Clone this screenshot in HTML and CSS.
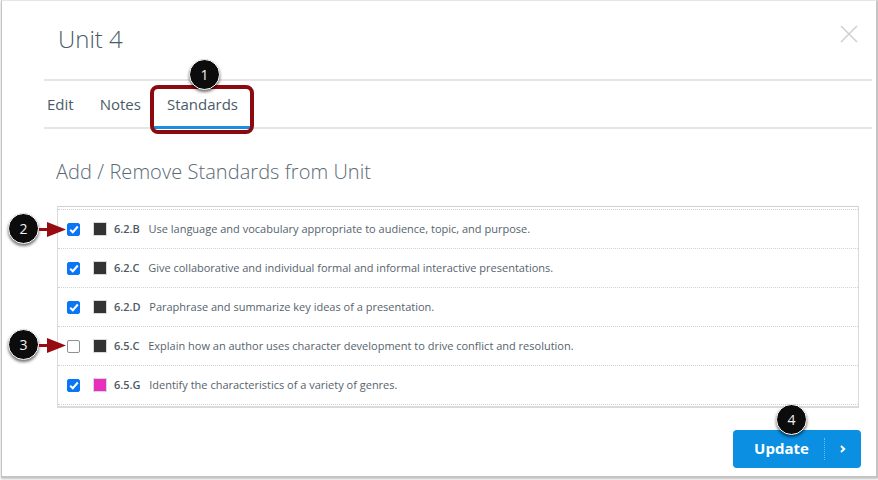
FILE: index.html
```html
<!DOCTYPE html>
<html lang="en">
<head>
<meta charset="utf-8">
<title>Unit 4</title>
<link rel="stylesheet" href="styles.css">
</head>
<body>
<div class="modal">
  <header class="head">
    <h1 class="title">Unit 4</h1>
    <svg class="close" width="18" height="18" viewBox="0 0 18 18"><path d="M1 1 L17 17 M17 1 L1 17" stroke="#cfd2d3" stroke-width="1.6" fill="none"/></svg>
  </header>
  <nav class="tabs">
    <span class="tab">Edit</span>
    <span class="tab">Notes</span>
    <span class="tab active">Standards</span>
  </nav>
  <h2 class="section">Add / Remove Standards from Unit</h2>
  <div class="list">
    <div class="row"><span class="check on"><svg width="10" height="9" viewBox="0 0 10 9"><path d="M1.2 4.8 L3.8 7.2 L8.8 1.5" stroke="#fff" stroke-width="2" fill="none"/></svg></span><span class="swatch dark"></span><b class="code">6.2.B</b><span class="text">Use language and vocabulary appropriate to audience, topic, and purpose.</span></div>
    <div class="row"><span class="check on"><svg width="10" height="9" viewBox="0 0 10 9"><path d="M1.2 4.8 L3.8 7.2 L8.8 1.5" stroke="#fff" stroke-width="2" fill="none"/></svg></span><span class="swatch dark"></span><b class="code">6.2.C</b><span class="text">Give collaborative and individual formal and informal interactive presentations.</span></div>
    <div class="row"><span class="check on"><svg width="10" height="9" viewBox="0 0 10 9"><path d="M1.2 4.8 L3.8 7.2 L8.8 1.5" stroke="#fff" stroke-width="2" fill="none"/></svg></span><span class="swatch dark"></span><b class="code">6.2.D</b><span class="text">Paraphrase and summarize key ideas of a presentation.</span></div>
    <div class="row"><span class="check"></span><span class="swatch dark"></span><b class="code">6.5.C</b><span class="text">Explain how an author uses character development to drive conflict and resolution.</span></div>
    <div class="row"><span class="check on"><svg width="10" height="9" viewBox="0 0 10 9"><path d="M1.2 4.8 L3.8 7.2 L8.8 1.5" stroke="#fff" stroke-width="2" fill="none"/></svg></span><span class="swatch pink"></span><b class="code">6.5.G</b><span class="text">Identify the characteristics of a variety of genres.</span></div>
  </div>
  <footer class="foot">
    <button class="update"><span class="update-label">Update</span><span class="update-icon"><svg width="6" height="8" viewBox="0 0 6 8"><path d="M1 1 L4.2 4 L1 7" stroke="#fff" stroke-width="2" fill="none"/></svg></span></button>
  </footer>
</div>

<div class="highlight"></div>
<span class="badge b1">1</span>
<span class="badge b2">2</span>
<span class="badge b3">3</span>
<span class="badge b4">4</span>
<svg class="arrow a2" width="28" height="15" viewBox="0 0 28 15"><path d="M0 6 H8 V0 L27 7.5 L8 15 V9 H0 Z" fill="#960c12"/></svg>
<svg class="arrow a3" width="28" height="15" viewBox="0 0 28 15"><path d="M0 6 H8 V0 L27 7.5 L8 15 V9 H0 Z" fill="#960c12"/></svg>
</body>
</html>
```
FILE: styles.css
```css
* { box-sizing: border-box; }
html, body { margin: 0; padding: 0; background: #fff; }
body {
  width: 878px;
  height: 480px;
  overflow: hidden;
  position: relative;
  font-family: "Open Sans", sans-serif;
}
.modal {
  width: 877px;
  height: 478px;
  margin-left: 1px;
  background: #fff;
  border-style: solid;
  border-color: #e6e6e6 #c4c4c4 #c4c4c4 #c4c4c4;
  border-width: 1px 2px 2px 1px;
  box-shadow: 0 1px 2px rgba(0,0,0,.25);
  display: flex;
  flex-direction: column;
  padding: 0 4px 0 42px;
}
.head {
  height: 80px;
  display: flex;
  justify-content: space-between;
  align-items: flex-start;
  border-bottom: 2px solid #e3e5e6;
}
.title {
  margin: 21px 0 0 14px;
  font-size: 24px;
  line-height: 33px;
  font-weight: 300;
  color: #4a5b68;
}
.close { margin: 24px 14px 0 0; }
.tabs {
  height: 48px;
  display: flex;
  border-bottom: 2px solid #e3e5e6;
  padding-left: 3px;
}
.tab {
  font-size: 15px;
  line-height: 20px;
  color: #4a5b68;
  padding-top: 13px;
  margin-right: 26px;
}
.tab.active {
  padding: 13px 13px 0;
  margin-left: -13px;
  height: 48px;
  border-bottom: 3px solid #1a8fe0;
}
.section {
  margin: 29px 0 0 12px;
  font-size: 20px;
  line-height: 27px;
  font-weight: 300;
  letter-spacing: .06px;
  color: #5a6a75;
}
.list {
  margin: 21px 13px 0 13px;
  height: 202px;
  border-style: solid;
  border-color: #cfd1d2 #d9dbdc #d9dbdc;
  border-width: 1px 1px 2px 1px;
  padding-top: 2px;
}
.row {
  height: 39px;
  display: flex;
  align-items: center;
  border-bottom: 1px dotted #cfd1d2;
  padding-left: 9px;
  font-size: 11px;
  color: #56636d;
}
.row:first-child {
  height: 40px;
  border-top: 1px dotted #cfd1d2;
}
.check {
  width: 13px;
  height: 13px;
  border-radius: 2px;
  border: 1px solid #8d9196;
  background: #fff;
  display: flex;
  align-items: center;
  justify-content: center;
  flex: none;
  margin-top: 1px;
}
.check.on { background: #0b76f5; border-color: #0b76f5; }
.swatch {
  width: 14px;
  height: 14px;
  margin-left: 13px;
  border: 1px solid #d8d8d8;
  flex: none;
}
.swatch.dark { background: #333; }
.swatch.pink { background: #e92dbd; }
.code {
  margin: 0 8.6px 2px 7px;
  font-weight: 600;
  color: #4d5a64;
}
.text { margin-bottom: 2px; }
.foot {
  display: flex;
  justify-content: flex-end;
  padding: 22px 11px 0 0;
}
.update {
  width: 128px;
  height: 38px;
  border: 0;
  border-radius: 4px;
  background: #0a8fe3;
  color: #fff;
  font-family: "Open Sans", sans-serif;
  font-weight: 700;
  font-size: 15px;
  padding: 0;
  display: flex;
  align-items: center;
}
.update-label { width: 91px; padding: 0 0 2px 6px; text-align: center; }
.update-icon {
  width: 37px;
  height: 22px;
  border-left: 1px dotted #6cbcf0;
  display: flex;
  align-items: center;
  justify-content: center;
}
.highlight {
  position: absolute;
  left: 150px;
  top: 85px;
  width: 104px;
  height: 49px;
  border: 4px solid #8b0a10;
  border-radius: 8px;
}
.badge {
  position: absolute;
  width: 31px;
  height: 31px;
  border-radius: 50%;
  background: #0c0c0c;
  border: 1px solid #fff;
  color: #f2f2f2;
  font-size: 14px;
  line-height: 29px;
  text-align: center;
  box-shadow: 0 2px 3px rgba(0,0,0,.55);
}
.b1 { left: 189px; top: 59px; }
.b2 { left: 8px; top: 213px; }
.b3 { left: 8px; top: 329px; }
.b4 { left: 776px; top: 404px; }
.arrow { position: absolute; left: 39px; }
.a2 { top: 222px; }
.a3 { top: 338px; }
```
